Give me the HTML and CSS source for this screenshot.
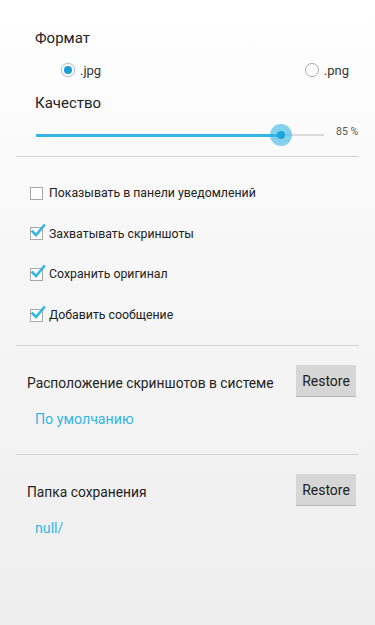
FILE: index.html
```html
<!DOCTYPE html>
<html lang="ru">
<head>
<meta charset="utf-8">
<link rel="stylesheet" href="styles.css">
</head>
<body>
<div class="page">
  <div class="title">Формат</div>
  <div class="radios">
    <label class="radio on"><span class="rdot"></span>.jpg</label>
    <label class="radio"><span class="rdot"></span>.png</label>
  </div>
  <div class="title q">Качество</div>
  <div class="slider">
    <div class="track">
      <div class="fill"></div>
      <div class="thumb"><span></span></div>
    </div>
    <div class="val">85 %</div>
  </div>
  <div class="divider d1"></div>
  <div class="checks">
    <div class="check"><span class="box"></span>Показывать в панели уведомлений</div>
    <div class="check on"><span class="box"><svg viewBox="0 0 16 16" width="16" height="16"><path d="M2.5 8.5 L6 12 L14 2.5" fill="none" stroke="#33b5e5" stroke-width="2.6" stroke-linecap="square"/></svg></span>Захватывать скриншоты</div>
    <div class="check on"><span class="box"><svg viewBox="0 0 16 16" width="16" height="16"><path d="M2.5 8.5 L6 12 L14 2.5" fill="none" stroke="#33b5e5" stroke-width="2.6" stroke-linecap="square"/></svg></span>Сохранить оригинал</div>
    <div class="check on"><span class="box"><svg viewBox="0 0 16 16" width="16" height="16"><path d="M2.5 8.5 L6 12 L14 2.5" fill="none" stroke="#33b5e5" stroke-width="2.6" stroke-linecap="square"/></svg></span>Добавить сообщение</div>
  </div>
  <div class="divider d2"></div>
  <div class="loc">
    <div class="locrow"><span class="loctext">Расположение скриншотов в системе</span><button class="btn">Restore</button></div>
    <div class="link">По умолчанию</div>
  </div>
  <div class="divider d3"></div>
  <div class="loc">
    <div class="locrow"><span class="loctext">Папка сохранения</span><button class="btn">Restore</button></div>
    <div class="link">null/</div>
  </div>
</div>
</body>
</html>
```

FILE: styles.css
```css
html, body {
  margin: 0;
  padding: 0;
}
body {
  width: 375px;
  height: 625px;
  background: linear-gradient(to bottom, #ffffff 0%, #f7f7f7 40%, #eeeeee 100%);
  font-family: Roboto, "Noto Sans", sans-serif;
  color: #222;
  overflow: hidden;
}
.page {
  padding: 28px 16px 0 16px;
}
.title {
  height: 20px;
  line-height: 20px;
  font-size: 15px;
  padding-left: 19px;
  color: #222;
}
.radios {
  margin-top: 10px;
  height: 24px;
  display: flex;
  justify-content: space-between;
  align-items: center;
  padding-left: 45px;
  padding-right: 10px;
}
.radio {
  display: flex;
  align-items: center;
  font-size: 13px;
  color: #333;
}
.rdot {
  width: 12px;
  height: 12px;
  border: 1px solid #aaa;
  border-radius: 50%;
  margin-right: 5px;
  box-sizing: content-box;
  position: relative;
  background: #fff;
}
.radio.on .rdot {
  border-color: #b8c8d0;
  box-shadow: 0 0 0 1px #e6eef2;
}
.radio.on .rdot::after {
  content: "";
  position: absolute;
  left: 2px;
  top: 2px;
  width: 8px;
  height: 8px;
  border-radius: 50%;
  background: #1a9fd6;
}
.q {
  margin-top: 11px;
}
.slider {
  margin-top: 11px;
  height: 22px;
  display: flex;
  align-items: center;
  padding-left: 20px;
}
.track {
  position: relative;
  width: 288px;
  height: 2px;
  background: #dcdcdc;
}
.fill {
  width: 245px;
  height: 3px;
  margin-top: -0.5px;
  background: #33b5e5;
}
.thumb {
  position: absolute;
  left: 234px;
  top: -10px;
  width: 22px;
  height: 22px;
  border-radius: 50%;
  background: rgba(51, 181, 229, 0.6);
  display: flex;
  align-items: center;
  justify-content: center;
}
.thumb span {
  width: 8px;
  height: 8px;
  border-radius: 50%;
  background: #1ea6dc;
}
.val {
  margin-left: 12px;
  margin-top: -8px;
  font-size: 10.5px;
  color: #555;
}
.divider {
  height: 1px;
  background: #d4d4d4;
}
.d1 {
  margin-top: 10px;
}
.checks {
  padding-top: 16px;
}
.check {
  height: 40.6px;
  display: flex;
  align-items: center;
  font-size: 12.3px;
  color: #222;
  padding-left: 14px;
}
.box {
  width: 11px;
  height: 11px;
  border: 1px solid #a8a8a8;
  margin-right: 6px;
  position: relative;
  background: #fff;
  flex: none;
}
.box svg {
  position: absolute;
  left: -1px;
  top: -5px;
}
.d2 {
  margin-top: 10px;
}
.loc {
  padding-left: 11px;
}
.locrow {
  margin-top: 19px;
  height: 31px;
  display: flex;
  align-items: center;
  justify-content: space-between;
  padding-right: 3px;
}
.loctext {
  font-size: 13.8px;
  color: #222;
  padding-top: 5px;
}
.btn {
  width: 60px;
  height: 31px;
  border: none;
  background: #d6d6d6;
  box-shadow: 0 1px 0 #b8b8b8;
  font-family: Roboto, "Noto Sans", sans-serif;
  font-size: 14px;
  color: #222;
  padding: 0;
}
.link {
  margin-top: 13px;
  height: 20px;
  line-height: 20px;
  padding-left: 8px;
  font-size: 14.2px;
  color: #33b5e5;
}
.d3 {
  margin-top: 25px;
}
```
